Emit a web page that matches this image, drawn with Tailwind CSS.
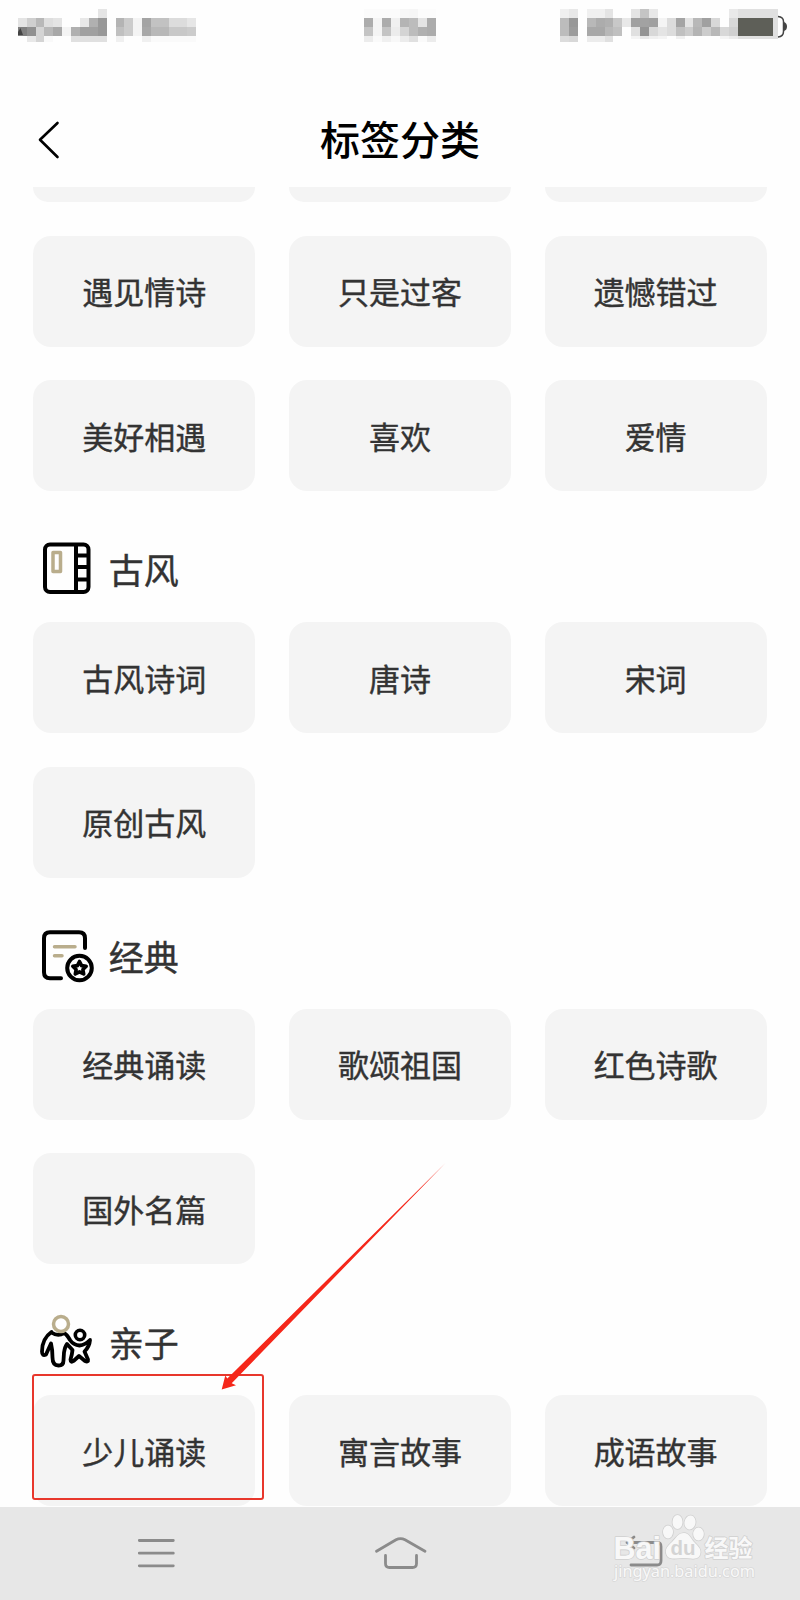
<!DOCTYPE html>
<html lang="zh-CN">
<head>
<meta charset="utf-8">
<title>标签分类</title>
<script src="https://cdn.jsdelivr.net/npm/@tailwindcss/browser@4"></script>
</head>
<body class="bg-white">
<div class="relative flex h-[1600px] w-[800px] flex-col overflow-hidden bg-[#fefefe] font-['Noto_Sans_CJK_SC',sans-serif] text-[#333]">
  <!-- status bar -->
  <svg id="status" class="h-[60px] w-[800px] shrink-0" viewBox="0 0 800 60" shape-rendering="crispEdges">
    <g id="cells"></g>
    <rect x="738" y="9" width="40" height="30" fill="#e0e0e0"/>
    <rect x="738" y="18" width="35" height="17.500" fill="#5e5f58"/>
    <path d="M18 35v-3l2.500-4 2.500 7z" fill="#444" shape-rendering="auto"/>
    <path d="M778 16.500q5.500.5 5.500 5v10q0 5-5.500 5.500" fill="none" stroke="#444" stroke-width="1.500" shape-rendering="auto"/>
    <path d="M784 22q3 1 3 4.500t-3 4.500z" fill="#444" shape-rendering="auto"/>
  </svg>
  <header class="grid h-[127px] shrink-0 grid-cols-[1fr_auto_1fr] items-start">
    <svg class="mt-[59px] ml-9 h-[42px] w-7" viewBox="0 0 28 42" fill="none" stroke="#000" stroke-width="2.600" stroke-linecap="round" stroke-linejoin="round"><path d="M21.500 4 4 20.800 21.500 38"/></svg>
    <h1 class="mt-[48px] text-[40px] leading-[60px] font-medium text-black">标签分类</h1>
  </header>
  <main class="flex h-[1320px] shrink-0 flex-col overflow-hidden px-[33.300px] [-webkit-text-stroke:0.4px_#333]">
    <div class="grid shrink-0 grid-cols-3 gap-x-[33.500px]">
      <div class="h-[14.700px] rounded-b-[18px] bg-[#f4f4f4]"></div>
      <div class="h-[14.700px] rounded-b-[18px] bg-[#f4f4f4]"></div>
      <div class="h-[14.700px] rounded-b-[18px] bg-[#f4f4f4]"></div>
    </div>
    <div class="mt-[34px] grid shrink-0 auto-rows-[111px] grid-cols-3 gap-x-[33.500px] gap-y-[33.600px] text-[31px] *:flex *:items-center *:justify-center *:rounded-[18px] *:bg-[#f4f4f4]">
      <div>遇见情诗</div><div>只是过客</div><div>遗憾错过</div>
      <div>美好相遇</div><div>喜欢</div><div>爱情</div>
    </div>
    <div class="flex h-[131px] shrink-0 items-start gap-[16px] pl-[5.500px]">
      <svg class="mt-[48px] h-[60px] w-[54px]" viewBox="0 0 54 60" fill="none" stroke="#000" stroke-width="4" stroke-linejoin="round"><rect x="6" y="5.500" width="43.500" height="47.500" rx="5"/><path d="M37 5.500v47.500M37 16.500h12.500M37 28h12.500M37 40.500h12.500"/><rect x="14" y="13.500" width="7.500" height="19" stroke="#b9ad8c" stroke-width="3.500"/></svg>
      <h2 class="mt-[52px] text-[35px] leading-[52px]">古风</h2>
    </div>
    <div class="grid shrink-0 auto-rows-[111px] grid-cols-3 gap-x-[33.500px] gap-y-[33.600px] text-[31px] *:flex *:items-center *:justify-center *:rounded-[18px] *:bg-[#f4f4f4]">
      <div>古风诗词</div><div>唐诗</div><div>宋词</div><div>原创古风</div>
    </div>
    <div class="flex h-[131px] shrink-0 items-start gap-[16px] pl-[5.500px]">
      <svg class="mt-[48px] h-[60px] w-[54px] overflow-visible" viewBox="0 0 54 60" fill="none" stroke="#000" stroke-width="4" stroke-linecap="round" stroke-linejoin="round"><path d="M22 52.300H11q-6 0-6-6v-34q0-6 6-6h29q6 0 6 6V22"/><path d="M15.500 20.800H36M15.500 29.800H23" stroke="#b9ad8c" stroke-width="3.500"/><circle cx="40.500" cy="42" r="12.300" stroke-width="4"/><path d="m40.500 35.500 2.100 4.100 4.600.7-3.300 3.200.8 4.500-4.200-2.100-4.200 2.100.8-4.500-3.300-3.200 4.600-.7z" stroke-width="3.600"/></svg>
      <h2 class="mt-[52px] text-[35px] leading-[52px]">经典</h2>
    </div>
    <div class="grid shrink-0 auto-rows-[111px] grid-cols-3 gap-x-[33.500px] gap-y-[33.600px] text-[31px] *:flex *:items-center *:justify-center *:rounded-[18px] *:bg-[#f4f4f4]">
      <div>经典诵读</div><div>歌颂祖国</div><div>红色诗歌</div><div>国外名篇</div>
    </div>
    <div class="flex h-[131px] shrink-0 items-start gap-[16px] pl-[5.500px]">
      <svg class="mt-[48px] h-[60px] w-[54px] overflow-visible" viewBox="39 1312.500 54 60" fill="none" stroke="#000" stroke-width="3.800" stroke-linecap="round" stroke-linejoin="round"><path d="M51.500 1332.500C45 1337 42 1345 42 1352q0 5 4 3l5-11q1.500 6 1.500 14 0 8 6 8 5 0 5-5l.5-8q1-6 3-8.500l5.500 6q-.5 5-2 9.500 0 3.500 3 1.500l5.500-5 6 5q3.500 1.500 3-1.500l-3.500-8q5-5 5.500-11.500-5 5-10.500 5.500-6-.5-9.500-5.500-3-5.500-6-7-6 4-12.500-.5z"/><circle cx="61" cy="1324.500" r="7.500" fill="#fefefe" stroke="#b9ad8c" stroke-width="3.500"/><circle cx="80" cy="1335.500" r="4.700" fill="#fefefe" stroke-width="3.600"/></svg>
      <h2 class="mt-[52px] text-[35px] leading-[52px]">亲子</h2>
    </div>
    <div class="grid shrink-0 auto-rows-[111px] grid-cols-3 gap-x-[33.500px] text-[31px] *:flex *:items-center *:justify-center *:rounded-[18px] *:bg-[#f4f4f4]">
      <div>少儿诵读</div><div>寓言故事</div><div>成语故事</div>
    </div>
  </main>
  <nav class="h-[93px] shrink-0 bg-[#e7e7e7]">
    <svg class="h-[93px] w-[800px]" viewBox="0 1507 800 93" fill="none" stroke="#8b8b8b" stroke-width="2.800" stroke-linecap="round" stroke-linejoin="round">
      <path d="M139.300 1540.500h34M139.300 1553.200h34M139.300 1565.800h34"/>
      <path d="m376.500 1551.300 19.500-11.500q4.500-2.500 9 0l20 11.500M385.500 1555.500v8q0 4 4 4h23q4 0 4-4v-8"/>
      <path d="m634 1537-7 5.500 7 5.500M627 1542.500h30q4 0 4 4V1561q0 4-4 4h-26"/>
    </svg>
  </nav>

  <!-- highlight box and arrow lying over the list -->
  <div class="absolute top-[1374px] left-[32px] h-[126px] w-[232px] rounded-[3px] border-2 border-[#e8372c]"></div>
  <svg class="absolute top-[1150px] left-[200px] h-[260px] w-[260px]" viewBox="0 0 260 260" fill="#f5271a"><path d="M245.500 13 27.300 228.500l-2-3-3.600 14 14.300-4.200-4.300-2z"/></svg>
  <!-- watermark -->
  <svg class="absolute top-[1500px] left-[600px] h-[95px] w-[170px]" viewBox="0 0 170 95" fill="#f8f8f8" stroke="#d0d0d0" stroke-width="1.600" paint-order="stroke" stroke-linejoin="round">
    <text x="13.500" y="58.500" font-family="Liberation Sans" font-weight="700" font-size="31" textLength="47.500" lengthAdjust="spacingAndGlyphs">Bai</text>
    <ellipse cx="68" cy="32" rx="5" ry="6.500"/><ellipse cx="77.500" cy="22" rx="5" ry="7"/><ellipse cx="90" cy="22.500" rx="5.500" ry="7" transform="rotate(10 90 22.500)"/><ellipse cx="98.500" cy="34" rx="5.300" ry="6.500"/>
    <path d="M84 33c-6 0-8 5-12 9-4 3.500-7 7-6 11 1 5 5 6 10 5.500q8-1 15 0c6 .8 9-1 9.500-6 .5-4-3-7-6-10-4-4-5-9.500-10.500-9.500z"/>
    <text x="70.500" y="55" font-family="Liberation Sans" font-weight="700" font-size="20.500" fill="#d4d4d4" stroke="none">du</text>
    <text x="104.500" y="57" font-family="Noto Sans CJK SC" font-weight="700" font-size="24">经验</text>
    <text x="14" y="76.500" font-family="Noto Sans" font-size="17" stroke="#d8d8d8" textLength="141" lengthAdjust="spacingAndGlyphs">jingyan.baidu.com</text>
  </svg>
</div>
<script>
// Mosaic rows: top, height, then runs of [first column, grey levels in hex]; "--" leaves a cell empty
const rows = [
  [9, 9, [[11,"e5"],[41,"fb fb fb fb f7 f6 fc fc"],[63,"f0 e8 -- f0 f0 e4 -- -- e4 c4 e8 -- -- -- -- -- -- -- -- e9"]]],
  [18, 8.8, [[2,"e4 cf b8 de e4 -- -- e8 b0 98 -- b4 cc f4 a4 c2 c2 dc dc e6"],[41,"ac f4 ac f0 b4 bc e4 ac"],[63,"bc 98 -- b8 ac b0 c8 e8 a0 a2 a0 f4 dc a4 e4 b8 a0 d8 -- d8"]]],
  [26.8, 8.7, [[2,"80 90 d4 b8 a8 f4 b0 a0 a0 98 -- c0 cc f4 a8 b8 b8 c8 c8 cc"],[41,"c4 f4 c4 ec d4 bc b0 ac"],[63,"bc 9c -- a8 a8 b8 c0 -- e0 94 d8 e4 dc c0 cc b4 cc b8 d8 d0"]]],
  [35.5, 6.5, [[3,"e8 d4 f9 -- -- e0 e0 e0 e0 -- f0 -- -- f0 fa fa fa fa fa"],[41,"ec fa f0 f8 ec e0 fa ec"],[63,"dc d8 -- ec ec e0"]]],
  [35.5, 3.5, [[71,"f4 e8 f0 f4 -- f0 -- -- -- -- f4 ec"]]]
];
const c = 8.89;
document.getElementById("cells").innerHTML = rows.map(([y,h,runs]) => runs.map(([s,v]) =>
  v.split(" ").map((g,i) => g === "--" ? "" : `<rect x="${(s+i)*c}" y="${y}" width="${c}" height="${h}" fill="#${g+g+g}"/>`).join("")).join("")).join("");
</script>
</body>
</html>
